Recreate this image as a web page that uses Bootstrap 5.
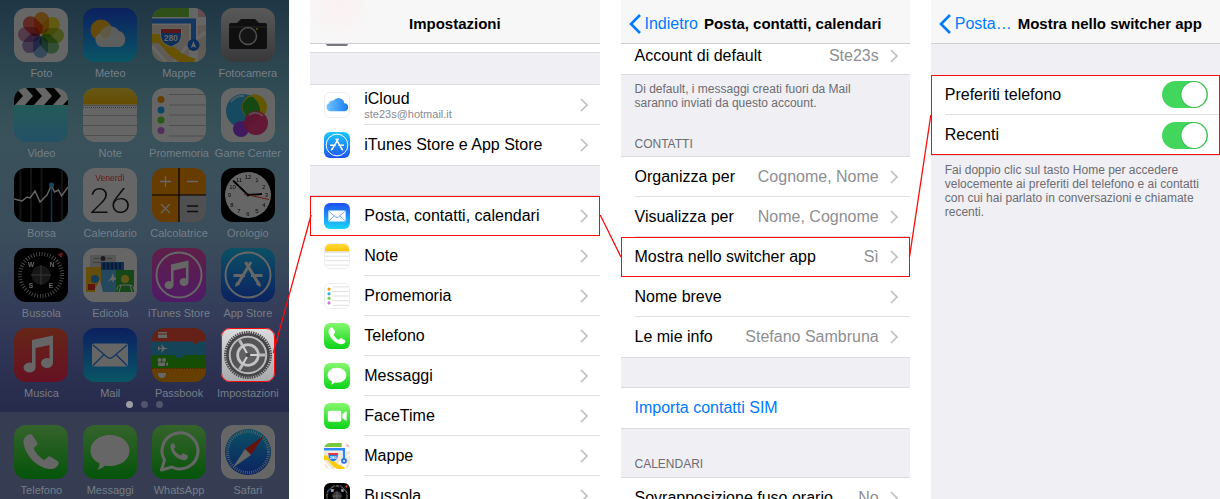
<!DOCTYPE html>
<html lang="it">
<head>
<meta charset="utf-8">
<meta name="viewport" content="width=device-width, initial-scale=1">
<title>Impostazioni – Mostra nello switcher app</title>
<link href="https://cdn.jsdelivr.net/npm/bootstrap@5.3.0/dist/css/bootstrap.min.css" rel="stylesheet">
<style>
  :root { --ios-blue: #007aff; --ios-group: #efeff4; --ios-line: #dcdce0; --ios-mute: #8e8e93; --mark-red: #f80d0d; }
  body { font-family: "Liberation Sans", Arial, sans-serif; font-size: 16px; line-height: 20px; color: #000; background: #fff; }
  a { text-decoration: none; color: inherit; }
  .screens { display: grid; grid-template-columns: repeat(4, minmax(0, 1fr)); column-gap: 21px; height: 100vh; overflow: hidden; }
  .screen { min-width: 0; overflow: hidden; white-space: nowrap; }
  .flow-lines { pointer-events: none; }

  /* home screen */
  .home { background: linear-gradient(#1f3645 0, #2d4750 70px, #39525a 130px, #3a4d5b 240px, #333b59 320px, #262a4b 412px); }
  .app-grid { display: grid; grid-template-columns: repeat(4, 1fr); row-gap: 8px; padding: 8px 7px 0; }
  .app { height: 72px; font-size: 11px; line-height: 22px; color: #757e87; }
  .app-icon { width: 54px; height: 54px; border-radius: 12px; filter: brightness(.4); }
  .app-icon.lit { filter: none; border-radius: 9px; outline: 1px solid var(--mark-red); outline-offset: -1px; }
  .pager { height: 12px; gap: 8px; padding-top: 1px; }
  .pager span { width: 7px; height: 7px; border-radius: 50%; background: #50546c; }
  .pager .now { background: #9c9da5; }
  .dock { background: #363d53; flex: 1; }
  .dock .app-grid { padding-top: 13px; }

  /* settings screens */
  .title-bar { height: 44px; padding: 5px 8px 0; background: #f7f7f7; border-bottom: 1px solid #cfcfd2; }
  .title-bar h1 { font-size: 15px; line-height: 20px; font-weight: 700; margin: 0; }
  .title-bar .back-link + h1 { margin-left: 6px; }
  .tinted { background: radial-gradient(circle at 28px 6px, #fbf1f2 0, #f7f7f7 36px); }
  .back-link { color: var(--ios-blue); }
  .rest { height: 8px; }
  .rest span { width: 22px; height: 2px; margin-left: 16px; background: #77777f; border-radius: 0 0 6px 6px; }
  .group-gap { background: var(--ios-group); border: solid var(--ios-line); border-width: 1px 0; color: #6d6d72; font-size: 12px; line-height: 14px; padding: 0 14px; }
  .gap-s { height: 31px; }
  .gap-m { height: 33px; }
  .gap-l { height: 50px; padding-bottom: 6px; }
  .gap-xl { height: 83px; padding-top: 7px; padding-bottom: 5px; }
  .cell { height: 40px; padding-left: 14px; gap: 14px; color: #000; background: #fff; }
  .cell .cell-body { border-bottom: 1px solid #dfdfe2; padding-right: 12px; gap: 11px; }
  .cell.last .cell-body { border-bottom: 0; }
  .cell.cut { height: 30px; }
  .cell.cut .cell-body { padding-bottom: 6px; }
  .cell-icon { width: 26px; height: 26px; border-radius: 6px; flex: none; }
  .cell-value { color: var(--ios-mute); }
  .cell-sub { font-size: 11px; line-height: 12px; color: #8a8a8f; }
  .cell-name { line-height: 18px; }
  .edge { border: 1px solid #ededf0; }
  .marked { outline: 1px solid var(--mark-red); outline-offset: -1px; }
  .cell.marked .cell-body { border-bottom-color: transparent; }
  .marked .ios-row { background: transparent; }
  .marked.group-box { background: #fff; }
  .note-last { flex: 1; border-bottom: 0; padding-top: 7px; white-space: normal; }
  .form-switch .form-check-input.ios-switch { width: 46px; height: 27px; margin: 0; border: 0; border-radius: 14px; background-color: #43d65c; background-image: radial-gradient(circle at 32px 50%, #fff 12px, #37bf50 13px, transparent 14px); background-size: 100% 100%; background-position: 0 0; box-shadow: none; }
  .ios-fill { background: var(--ios-group); }
</style>
</head>
<body>

<svg width="0" height="0" class="position-absolute" aria-hidden="true">
  <defs>
    <linearGradient id="gBlue" x2="0" y2="1"><stop stop-color="#1d4ff0"/><stop offset="1" stop-color="#19d5fd"/></linearGradient>
    <linearGradient id="gSky" x2="0" y2="1"><stop stop-color="#1bc8fb"/><stop offset="1" stop-color="#1d55f2"/></linearGradient>
    <linearGradient id="gGreen" x2="0" y2="1"><stop stop-color="#86f76e"/><stop offset="1" stop-color="#0bd318"/></linearGradient>
    <linearGradient id="gRed" x2="0" y2="1"><stop stop-color="#ff5e3a"/><stop offset="1" stop-color="#ff2a58"/></linearGradient>
    <linearGradient id="gPink" x2="0" y2="1"><stop stop-color="#ef4db6"/><stop offset="1" stop-color="#c643fc"/></linearGradient>
    <linearGradient id="gGrey" x2="0" y2="1"><stop stop-color="#dedede"/><stop offset="1" stop-color="#8e8e93"/></linearGradient>
    <linearGradient id="gSilver" x2="0" y2="1"><stop stop-color="#dcdcde"/><stop offset="1" stop-color="#a8a9ac"/></linearGradient>
    <linearGradient id="gYellow" x2="0" y2="1"><stop stop-color="#ffd93a"/><stop offset="1" stop-color="#ffc200"/></linearGradient>
    <linearGradient id="gVideo" x2="0" y2="1"><stop stop-color="#55efcb"/><stop offset="1" stop-color="#5bcaff"/></linearGradient>
    <linearGradient id="gCloud"><stop stop-color="#6fc6fb"/><stop offset="1" stop-color="#1a7bf2"/></linearGradient>

    <symbol id="foto" viewBox="0 0 54 54"><rect width="54" height="54" fill="#fff"/>
      <g style="isolation:isolate"><g style="mix-blend-mode:multiply"><rect x="20" y="4" width="15" height="22" rx="7.500" fill="#fbaa35"/></g>
      <g style="mix-blend-mode:multiply"><rect x="20" y="4" width="15" height="22" rx="7.500" fill="#f0e02c" transform="rotate(45 27 27)"/></g>
      <g style="mix-blend-mode:multiply"><rect x="20" y="4" width="15" height="22" rx="7.500" fill="#bcd54a" transform="rotate(90 27 27)"/></g>
      <g style="mix-blend-mode:multiply"><rect x="20" y="4" width="15" height="22" rx="7.500" fill="#7cc680" transform="rotate(135 27 27)"/></g>
      <g style="mix-blend-mode:multiply"><rect x="20" y="4" width="15" height="22" rx="7.500" fill="#84b6e2" transform="rotate(180 27 27)"/></g>
      <g style="mix-blend-mode:multiply"><rect x="20" y="4" width="15" height="22" rx="7.500" fill="#a792cc" transform="rotate(225 27 27)"/></g>
      <g style="mix-blend-mode:multiply"><rect x="20" y="4" width="15" height="22" rx="7.500" fill="#cf94bf" transform="rotate(270 27 27)"/></g>
      <g style="mix-blend-mode:multiply"><rect x="20" y="4" width="15" height="22" rx="7.500" fill="#f2695a" transform="rotate(315 27 27)"/></g></g></symbol>

    <symbol id="meteo" viewBox="0 0 54 54"><rect width="54" height="54" fill="url(#gBlue)"/><circle cx="18" cy="22" r="10.500" fill="#fdbb1c"/>
      <path d="M19 39a7 7 0 0 1-2-13.500A11 11 0 0 1 36 23a8.500 8.500 0 0 1 1 16z" fill="#f6f3e6" fill-opacity=".93"/><path d="M17 25.500A11 11 0 0 1 28 17a10.500 10.500 0 0 1-6 14 9 9 0 0 1-5-5.500z" fill="#e9dba4" fill-opacity=".7"/></symbol>

    <symbol id="mappe" viewBox="0 0 54 54"><rect width="54" height="54" fill="#efe6d4"/><path d="M0 0h37v9H0z" fill="#76c83c"/><path d="M46 0h8v9h-8z" fill="#f6bccb"/>
      <path d="M37 0h9v54h-9zM0 9h54v8H0z" fill="#fff"/><path d="M0 38 14 54M46 30l8-6M22 54l20-24" stroke="#fff" stroke-width="3"/><path d="M-2 31c12-3 14 3 20 10s12 10 24 14" stroke="#fc0" stroke-width="9" fill="none"/>
      <path d="M0 13h41.500v25" stroke="#2f86f6" stroke-width="5" fill="none"/><circle cx="41.500" cy="37" r="6" fill="#1f6fe0"/><path d="m41.500 33 2.800 7-2.800-1.500-2.800 1.500z" fill="#fff"/>
      <path d="M9 21h20q2 11-4 15l-6 3-6-3Q7 32 9 21z" fill="#2676dd" stroke="#fff"/><path d="M9 21h20v4H9z" fill="#e0393e"/><text x="19" y="33" font-size="8.500" font-weight="700" text-anchor="middle" fill="#fff">280</text></symbol>

    <symbol id="fotocamera" viewBox="0 0 54 54"><rect width="54" height="54" fill="url(#gGrey)"/><path d="M8 17q0-2 2-2h6l4-4h14l4 4h6q2 0 2 2v22q0 2-2 2H10q-2 0-2-2z" fill="#262628"/><path d="M8 19h38" stroke="#5c5c60"/><circle cx="27" cy="28" r="8.500" fill="#333" stroke="#c9c9c9" stroke-width="1.500"/><circle cx="36" cy="21" r="1" fill="#fc0"/></symbol>

    <symbol id="video" viewBox="0 0 54 54"><rect width="54" height="54" fill="url(#gVideo)"/><path d="M0 0h54v17H0z" fill="#fff"/><path d="M-7 0h9l7 8-8 9h-9l8-9zM12 0h9l7 8-8 9h-9l8-9zM31 0h9l7 8-8 9h-9l8-9zM50 0h9v17H49l8-9z" fill="#0b0b0b"/></symbol>

    <symbol id="note" viewBox="0 0 54 54"><rect width="54" height="54" fill="#fff"/><path d="M0 0h54v16.500H0z" fill="url(#gYellow)"/><path d="M0 17.500h54M0 27.500h54M0 37.500h54M0 47.500h54" stroke="#c6c6c8" stroke-width="1.200"/><path d="M0 19.500h54" stroke="#999" stroke-dasharray="1 1"/></symbol>

    <symbol id="promemoria" viewBox="0 0 54 54"><rect width="54" height="54" fill="#fff"/><path d="M17 6.500h37M17 17h37M17 27h37M17 37.500h37M17 48h37" stroke="#c2c2c6" stroke-width="1.200"/><circle cx="9" cy="11.500" r="3.500" fill="#ff9500"/><circle cx="9" cy="22" r="3.500" fill="#1badf8"/><circle cx="9" cy="32" r="3.500" fill="#63da38"/><circle cx="9" cy="42.500" r="3.500" fill="#cc73e1"/></symbol>

    <symbol id="gamecenter" viewBox="0 0 54 54"><rect width="54" height="54" fill="#fff"/><circle cx="22" cy="23" r="17" fill="#35b8ee"/><circle cx="33.500" cy="19" r="12.500" fill="#f8d90f"/><path d="M21.500 17A13 13 0 0 1 31 8.500a17 17 0 0 1 6 22.500A13 13 0 0 1 21.500 17z" fill="#35b52e"/><circle cx="20" cy="41" r="8" fill="#9f3ff0"/><circle cx="35" cy="35" r="12" fill="#f72f7d" fill-opacity=".93"/><path d="M10 14q5-7 13-6M28 27q7-5 14 1" stroke="#fff" stroke-opacity=".6" stroke-width="2" fill="none"/></symbol>

    <symbol id="borsa" viewBox="0 0 54 54"><rect width="54" height="54"/><path d="M6.500 0v54M27.500 0v54M48 0v54M17 0v54" stroke="#333" stroke-width="2"/><path d="M37.500 17v37" stroke="#1b8fd0" stroke-width="1.500"/><path d="m0 31 8 2 5-4 3 1 5-7 5 11 7-7 4.500-10 3 7 4-2 3 6 6.500-9" fill="none" stroke="#fff" stroke-width="1.400"/><circle cx="37.500" cy="17" r="2.500" fill="#2fb7ff"/></symbol>

    <symbol id="calendario" viewBox="0 0 54 54"><rect width="54" height="54" fill="#fff"/><text x="27" y="13" font-size="8.500" text-anchor="middle" fill="#ff3b30">Venerdì</text><text x="27" y="45" font-family="Lato, sans-serif" font-size="36" font-weight="300" text-anchor="middle" fill="#222">26</text></symbol>

    <symbol id="calcolatrice" viewBox="0 0 54 54"><rect width="54" height="54" fill="#ff9500"/><path d="M27 27h27v27H27z" fill="#c7c7cc"/><path d="M27 0v54M0 27h54" stroke="#000" stroke-width="1.200"/><path d="M13.500 8v11M8 13.500h11M35 13.500h11M9 36l9 9m0-9-9 9" stroke="#fff" stroke-width="1.300"/><path d="M35 38h11M35 43.500h11" stroke="#222" stroke-width="1.300"/></symbol>

    <symbol id="orologio" viewBox="0 0 54 54"><rect width="54" height="54"/><circle cx="27" cy="27" r="23" fill="#fff"/><g font-size="6" text-anchor="middle" fill="#222"><text x="27" y="11">12</text><text x="36" y="14">1</text><text x="43" y="20.500">2</text><text x="45.500" y="29">3</text><text x="43" y="38.500">4</text><text x="36" y="45">5</text><text x="27" y="47.500">6</text><text x="18" y="45">7</text><text x="11" y="38.500">8</text><text x="8.500" y="29">9</text><text x="11.500" y="20.500">10</text><text x="18" y="14">11</text></g><path d="M27 27 12 12.500M27 27l14-1" stroke="#000" stroke-width="1.800"/><path d="m23 26 25 5.500" stroke="#ff3b30"/><circle cx="27" cy="27" r="1.500"/></symbol>

    <symbol id="bussola" viewBox="0 0 54 54"><rect width="54" height="54"/><circle cx="27" cy="27" r="21" fill="none" stroke="#bbb" stroke-width="4" stroke-dasharray=".9 1.850"/><circle cx="27" cy="27" r="9.500" fill="#3a3a3c"/><path d="M27 17v20M17 27h20" stroke="#888"/><g font-size="6.500" font-weight="700" fill="#fff" text-anchor="middle"><text x="17" y="19">W</text><text x="38" y="19">N</text><text x="17" y="40">S</text><text x="37" y="40">E</text></g><path d="m49 4-1.500 6-4-3.500z" fill="#ff3b30"/></symbol>

    <symbol id="edicola" viewBox="0 0 54 54"><rect width="54" height="54" fill="#fff"/><path d="M7 7h26v12H7z" fill="#d6d6d6"/><circle cx="20" cy="10.500" r="2.500" fill="#444"/><path d="M11 10.500h5M24 10.500h5M10 14.500h19" stroke="#999"/><path d="M3 19h16v25H3z" fill="#fcc41a"/><circle cx="12" cy="31" r="4" fill="#3596dc"/><path d="M5 36h7v6H5z" fill="#e5352b"/><path d="M18 14h23v30H18z" fill="#5ab4ea"/><path d="M18 14h23v8H18z" fill="#2b74c4"/><path d="M21 15v6M25 15v6M29 15v6M33 15v6M37 15v6" stroke="#0b2e66" stroke-width="1.500"/><path d="m12 41 5-9 3 12h-8z" fill="#fff"/><path d="m30 25 1 4 4 2-4 1-1 3-1-3-4 1 3-3z" fill="#fff"/><path d="M33 22h18v22H33z" fill="#35b13c"/><circle cx="42" cy="31" r="4" fill="#f1d73a"/><path d="M34 42q0-5 5-5h7q5 0 5 5M38 37l-2 7M47 37l2 7" stroke="#fff" fill="none"/></symbol>

    <symbol id="itunes" viewBox="0 0 54 54"><rect width="54" height="54" fill="url(#gPink)"/><circle cx="27" cy="27" r="22.500" fill="none" stroke="#fff" stroke-width="2"/><path d="M19 16.500 36.500 12.500V34a4.500 4 0 1 1-2.500-3.600V19.500L21.500 22.500V37A4.500 4 0 1 1 19 33.500z" fill="#fff"/></symbol>

    <symbol id="appstore" viewBox="0 0 54 54"><rect width="54" height="54" fill="url(#gSky)"/><circle cx="27" cy="27" r="22.500" fill="none" stroke="#fff" stroke-width="2"/><path d="M30 14 16.500 36.500M24.500 14 38 36.500M12.500 27.500H24M30 27.500h11.500" stroke="#fff" stroke-width="3"/><path d="m15 34 4 2.500-5 2.500zM39 34l-4 2.500 5 2.500z" fill="#fff"/></symbol>

    <symbol id="musica" viewBox="0 0 54 54"><rect width="54" height="54" fill="url(#gRed)"/><path d="M18 12 39 7.500V35a6 5 0 1 1-3.500-4.500V17L21.500 20V40A6 5 0 1 1 18 35z" fill="#fff"/></symbol>

    <symbol id="mail" viewBox="0 0 54 54"><rect width="54" height="54" fill="url(#gBlue)"/><rect x="9" y="15.500" width="36" height="23" rx="2" fill="#fff"/><path d="m10 17 14 12q3 2.500 6 0l14-12M10 37.500l11-11M44 37.500l-11-11" fill="none" stroke="#2c86ef" stroke-width="1.400"/></symbol>

    <symbol id="passbook" viewBox="0 0 54 54"><rect width="54" height="54" fill="#ff9a00"/><path d="M0 0h54v40H0z" fill="#35c10d"/><path d="M0 0h54v27H32a5.500 5.500 0 0 1-10 0H0z" fill="#35aadc"/><path d="M0 0h54v13.500h-8a2.500 2.500 0 0 1-5 0H0z" fill="#fc4f3b"/><path d="M0 40.500h54" stroke="#9a6a00" stroke-dasharray="1.500 1.500"/><g fill="#fff"><path d="M6 4h9v1.500H6zM6 6.500h9V10H6z"/><path d="M6 17.500 8 20h2l-1-4 4 4h2q1 .5 0 1h-2l-4 4 1-4H8l-2 2z"/><circle cx="7.500" cy="32" r="2"/><circle cx="12" cy="32" r="2"/><path d="M6 34.500h7V38H6zm8 1 2-1.500V38l-2-1z"/><path d="M6 45h8q0 5-4 5t-4-5z"/></g></symbol>

    <symbol id="impostazioni" viewBox="0 0 54 54"><rect width="54" height="54" fill="url(#gSilver)"/><circle cx="27" cy="27" r="22.500" fill="none" stroke="#4a4a4c" stroke-width="3" stroke-dasharray="1.400 .9"/><circle cx="27" cy="27" r="20.500" fill="#b9babc" stroke="#444446" stroke-width="2.500"/><circle cx="27" cy="27" r="14.500" fill="none" stroke="#545456" stroke-width="5.500"/><path d="M27 27h17M27 27 18.500 12.300M27 27l-8.500 14.700" stroke="#b9babc" stroke-width="3"/><circle cx="27" cy="27" r="10" fill="#606062" stroke="#c4c4c6" stroke-width="2"/><path d="M27 27h10M27 27l-5-8.700M27 27l-5 8.700" stroke="#d0d0d2" stroke-width="2"/><circle cx="27" cy="27" r="2.300" fill="#4c4c4e"/></symbol>

    <symbol id="telefono" viewBox="0 0 54 54"><rect width="54" height="54" fill="url(#gGreen)"/><path d="M15 9.500c-3 1-6 4-5.500 8C11 30 23 42.500 35 44c5 .5 8-1.500 9.500-5 .5-1.300 0-2.200-1-3l-6.500-4c-1.500-1-2.500-.8-3.500.2l-2 2c-.8.800-1.800.8-2.800 0-4-3-6.500-6-8.500-9.500-.6-1-.4-2 .4-2.600l1.800-1.400c1-.9 1.200-2 .5-3.400L18.500 10.500c-.8-1.300-2-1.500-3.500-1z" fill="#fff"/></symbol>

    <symbol id="messaggi" viewBox="0 0 54 54"><rect width="54" height="54" fill="url(#gGreen)"/><path d="M27 10c11 0 19.500 6.500 19.500 15.500S38 41 27 41q-2.500 0-5-.5c-2 2-4.500 3.500-7.500 4 1.500-2 2.300-4 2-6-5.500-2.800-9-7.300-9-13C7.500 16.500 16 10 27 10z" fill="#fff"/></symbol>

    <symbol id="whatsapp" viewBox="0 0 54 54"><rect width="54" height="54" fill="url(#gGreen)"/><path d="m9.500 45 3-10A18 18 0 1 1 20 42z" fill="none" stroke="#fff" stroke-width="3" stroke-linejoin="round"/><path d="M21 18c-2 1-3 3-2.500 5 1.500 6 6 10.500 12 12 3 .6 5-.6 5.500-3.500 0-.6-.3-1-.8-1.200l-3.500-1.800c-.6-.2-1-.1-1.400.3l-1.500 1.700c-3.300-1.300-5.500-3.500-7-6.500l1.300-1.500c.4-.5.4-1 .2-1.500L22 18.500c-.2-.4-.6-.6-1-.5z" fill="#fff"/></symbol>

    <symbol id="safari" viewBox="0 0 54 54"><rect width="54" height="54" fill="#fff"/><circle cx="27" cy="27" r="23" fill="url(#gSky)"/><circle cx="27" cy="27" r="20.500" fill="none" stroke="#fff" stroke-width="3" stroke-dasharray=".7 1.450"/><path d="M42.500 11 24 24l6 6z" fill="#ff2d20"/><path d="M11.500 43 24 24l6 6z" fill="#fff"/></symbol>

    <symbol id="facetime" viewBox="0 0 54 54"><rect width="54" height="54" fill="url(#gGreen)"/><rect x="8" y="16" width="28" height="23" rx="4" fill="#fff"/><path d="m38 24 6-6q3-2 3 1v16q0 3-3 1l-6-5z" fill="#fff"/></symbol>

    <symbol id="icloud" viewBox="0 0 54 54"><rect width="54" height="54" fill="#fff"/><path d="M12 41a9.500 9.500 0 0 1-3-18 8 8 0 0 1 10-6A13.500 13.500 0 0 1 43.500 23a9 9 0 0 1-1 18z" fill="url(#gCloud)"/></symbol>

    <symbol id="chev" viewBox="0 0 8 14"><path d="m1 1 6 6-6 6" fill="none" stroke="#c0c0c5" stroke-width="1.700"/></symbol>
    <symbol id="back" viewBox="0 0 12 20"><path d="m11 1-9 9 9 9" fill="none" stroke="#007aff" stroke-width="2.600"/></symbol>
  </defs>
</svg>

<main class="position-relative overflow-hidden">
  <div class="screens">

    <section class="screen home d-flex flex-column" aria-label="Schermata Home">
      <nav class="app-grid text-center">
        <a class="app" href="#"><svg class="app-icon d-block mx-auto"><use href="#foto"/></svg>Foto</a>
        <a class="app" href="#"><svg class="app-icon d-block mx-auto"><use href="#meteo"/></svg>Meteo</a>
        <a class="app" href="#"><svg class="app-icon d-block mx-auto"><use href="#mappe"/></svg>Mappe</a>
        <a class="app" href="#"><svg class="app-icon d-block mx-auto"><use href="#fotocamera"/></svg>Fotocamera</a>
        <a class="app" href="#"><svg class="app-icon d-block mx-auto"><use href="#video"/></svg>Video</a>
        <a class="app" href="#"><svg class="app-icon d-block mx-auto"><use href="#note"/></svg>Note</a>
        <a class="app" href="#"><svg class="app-icon d-block mx-auto"><use href="#promemoria"/></svg>Promemoria</a>
        <a class="app" href="#"><svg class="app-icon d-block mx-auto"><use href="#gamecenter"/></svg>Game Center</a>
        <a class="app" href="#"><svg class="app-icon d-block mx-auto"><use href="#borsa"/></svg>Borsa</a>
        <a class="app" href="#"><svg class="app-icon d-block mx-auto"><use href="#calendario"/></svg>Calendario</a>
        <a class="app" href="#"><svg class="app-icon d-block mx-auto"><use href="#calcolatrice"/></svg>Calcolatrice</a>
        <a class="app" href="#"><svg class="app-icon d-block mx-auto"><use href="#orologio"/></svg>Orologio</a>
        <a class="app" href="#"><svg class="app-icon d-block mx-auto"><use href="#bussola"/></svg>Bussola</a>
        <a class="app" href="#"><svg class="app-icon d-block mx-auto"><use href="#edicola"/></svg>Edicola</a>
        <a class="app" href="#"><svg class="app-icon d-block mx-auto"><use href="#itunes"/></svg>iTunes Store</a>
        <a class="app" href="#"><svg class="app-icon d-block mx-auto"><use href="#appstore"/></svg>App Store</a>
        <a class="app" href="#"><svg class="app-icon d-block mx-auto"><use href="#musica"/></svg>Musica</a>
        <a class="app" href="#"><svg class="app-icon d-block mx-auto"><use href="#mail"/></svg>Mail</a>
        <a class="app" href="#"><svg class="app-icon d-block mx-auto"><use href="#passbook"/></svg>Passbook</a>
        <a class="app" href="#"><svg class="app-icon lit d-block mx-auto"><use href="#impostazioni"/></svg>Impostazioni</a>
      </nav>
      <div class="pager d-flex justify-content-center align-items-start" aria-hidden="true"><span class="now"></span><span></span><span></span></div>
      <div class="dock">
        <nav class="app-grid text-center">
          <a class="app" href="#"><svg class="app-icon d-block mx-auto"><use href="#telefono"/></svg>Telefono</a>
          <a class="app" href="#"><svg class="app-icon d-block mx-auto"><use href="#messaggi"/></svg>Messaggi</a>
          <a class="app" href="#"><svg class="app-icon d-block mx-auto"><use href="#whatsapp"/></svg>WhatsApp</a>
          <a class="app" href="#"><svg class="app-icon d-block mx-auto"><use href="#safari"/></svg>Safari</a>
        </nav>
      </div>
    </section>

    <section class="screen">
      <header class="title-bar tinted d-flex align-items-center justify-content-center"><h1>Impostazioni</h1></header>
      <div class="rest"><span class="d-block"></span></div>
      <div class="group-gap gap-m"></div>
      <a class="cell d-flex align-items-center" href="#"><svg class="cell-icon edge"><use href="#icloud"/></svg><span class="cell-body d-flex align-items-center justify-content-between flex-grow-1 h-100"><span><span class="cell-name d-block">iCloud</span><span class="cell-sub d-block">ste23s@hotmail.it</span></span><svg width="8" height="14"><use href="#chev"/></svg></span></a>
      <a class="cell last d-flex align-items-center" href="#"><svg class="cell-icon"><use href="#appstore"/></svg><span class="cell-body d-flex align-items-center justify-content-between flex-grow-1 h-100">iTunes Store e App Store<svg width="8" height="14"><use href="#chev"/></svg></span></a>
      <div class="group-gap gap-s"></div>
      <a class="cell marked d-flex align-items-center" href="#"><svg class="cell-icon"><use href="#mail"/></svg><span class="cell-body d-flex align-items-center justify-content-between flex-grow-1 h-100">Posta, contatti, calendari<svg width="8" height="14"><use href="#chev"/></svg></span></a>
      <a class="cell d-flex align-items-center" href="#"><svg class="cell-icon edge"><use href="#note"/></svg><span class="cell-body d-flex align-items-center justify-content-between flex-grow-1 h-100">Note<svg width="8" height="14"><use href="#chev"/></svg></span></a>
      <a class="cell d-flex align-items-center" href="#"><svg class="cell-icon edge"><use href="#promemoria"/></svg><span class="cell-body d-flex align-items-center justify-content-between flex-grow-1 h-100">Promemoria<svg width="8" height="14"><use href="#chev"/></svg></span></a>
      <a class="cell d-flex align-items-center" href="#"><svg class="cell-icon"><use href="#telefono"/></svg><span class="cell-body d-flex align-items-center justify-content-between flex-grow-1 h-100">Telefono<svg width="8" height="14"><use href="#chev"/></svg></span></a>
      <a class="cell d-flex align-items-center" href="#"><svg class="cell-icon"><use href="#messaggi"/></svg><span class="cell-body d-flex align-items-center justify-content-between flex-grow-1 h-100">Messaggi<svg width="8" height="14"><use href="#chev"/></svg></span></a>
      <a class="cell d-flex align-items-center" href="#"><svg class="cell-icon"><use href="#facetime"/></svg><span class="cell-body d-flex align-items-center justify-content-between flex-grow-1 h-100">FaceTime<svg width="8" height="14"><use href="#chev"/></svg></span></a>
      <a class="cell d-flex align-items-center" href="#"><svg class="cell-icon"><use href="#mappe"/></svg><span class="cell-body d-flex align-items-center justify-content-between flex-grow-1 h-100">Mappe<svg width="8" height="14"><use href="#chev"/></svg></span></a>
      <a class="cell d-flex align-items-center" href="#"><svg class="cell-icon"><use href="#bussola"/></svg><span class="cell-body d-flex align-items-center justify-content-between flex-grow-1 h-100">Bussola<svg width="8" height="14"><use href="#chev"/></svg></span></a>
    </section>

    <section class="screen">
      <header class="title-bar d-flex align-items-center"><a class="back-link d-flex align-items-center" href="#"><svg class="me-1" width="12" height="20"><use href="#back"/></svg>Indietro</a><h1>Posta, contatti, calendari</h1></header>
      <a class="cell last cut d-flex" href="#"><span class="cell-body d-flex align-items-center justify-content-between flex-grow-1"><span>Account di default</span><span class="cell-value ms-auto">Ste23s</span><svg width="8" height="14"><use href="#chev"/></svg></span></a>
      <div class="group-gap gap-xl d-flex flex-column justify-content-between"><span>Di default, i messaggi creati fuori da Mail<br>saranno inviati da questo account.</span><span>CONTATTI</span></div>
      <a class="cell d-flex" href="#"><span class="cell-body d-flex align-items-center justify-content-between flex-grow-1"><span>Organizza per</span><span class="cell-value ms-auto">Cognome, Nome</span><svg width="8" height="14"><use href="#chev"/></svg></span></a>
      <a class="cell d-flex" href="#"><span class="cell-body d-flex align-items-center justify-content-between flex-grow-1"><span>Visualizza per</span><span class="cell-value ms-auto">Nome, Cognome</span><svg width="8" height="14"><use href="#chev"/></svg></span></a>
      <a class="cell marked d-flex" href="#"><span class="cell-body d-flex align-items-center justify-content-between flex-grow-1"><span>Mostra nello switcher app</span><span class="cell-value ms-auto">Sì</span><svg width="8" height="14"><use href="#chev"/></svg></span></a>
      <a class="cell d-flex" href="#"><span class="cell-body d-flex align-items-center justify-content-between flex-grow-1"><span>Nome breve</span><svg width="8" height="14"><use href="#chev"/></svg></span></a>
      <a class="cell last d-flex" href="#"><span class="cell-body d-flex align-items-center justify-content-between flex-grow-1"><span>Le mie info</span><span class="cell-value ms-auto">Stefano Sambruna</span><svg width="8" height="14"><use href="#chev"/></svg></span></a>
      <div class="group-gap gap-s"></div>
      <a class="cell last d-flex align-items-center" href="#"><span class="back-link">Importa contatti SIM</span></a>
      <div class="group-gap gap-l d-flex align-items-end"><span>CALENDARI</span></div>
      <a class="cell d-flex" href="#"><span class="cell-body d-flex align-items-center justify-content-between flex-grow-1"><span>Sovrapposizione fuso orario</span><span class="cell-value ms-auto">No</span><svg width="8" height="14"><use href="#chev"/></svg></span></a>
    </section>

    <section class="screen d-flex flex-column ios-fill">
      <header class="title-bar d-flex align-items-center"><a class="back-link d-flex align-items-center" href="#"><svg class="me-1" width="12" height="20"><use href="#back"/></svg>Posta…</a><h1>Mostra nello switcher app</h1></header>
      <div class="gap-s"></div>
      <div class="marked group-box">
        <div class="cell ios-row d-flex"><div class="cell-body form-switch d-flex align-items-center justify-content-between flex-grow-1 ps-0"><label for="fav">Preferiti telefono</label><input class="form-check-input ios-switch" type="checkbox" role="switch" id="fav" checked></div></div>
        <div class="cell ios-row last d-flex"><div class="cell-body form-switch d-flex align-items-center justify-content-between flex-grow-1 ps-0"><label for="rec">Recenti</label><input class="form-check-input ios-switch" type="checkbox" role="switch" id="rec" checked></div></div>
      </div>
      <div class="group-gap note-last">Fai doppio clic sul tasto Home per accedere<br>velocemente ai preferiti del telefono e ai contatti<br>con cui hai parlato in conversazioni e chiamate<br>recenti.</div>
    </section>
  </div>

  <svg class="flow-lines position-absolute top-0 start-0 w-100 h-100" stroke="#f80d0d" stroke-width="1.300" aria-hidden="true">
    <line x1="22.400%" y1="353" x2="25.500%" y2="215"/>
    <line x1="49.200%" y1="215" x2="50.900%" y2="257"/>
    <line x1="74.550%" y1="257" x2="76.300%" y2="115"/>
  </svg>
</main>
<script src="https://cdn.jsdelivr.net/npm/bootstrap@5.3.0/dist/js/bootstrap.bundle.min.js"></script>
</body>
</html>
